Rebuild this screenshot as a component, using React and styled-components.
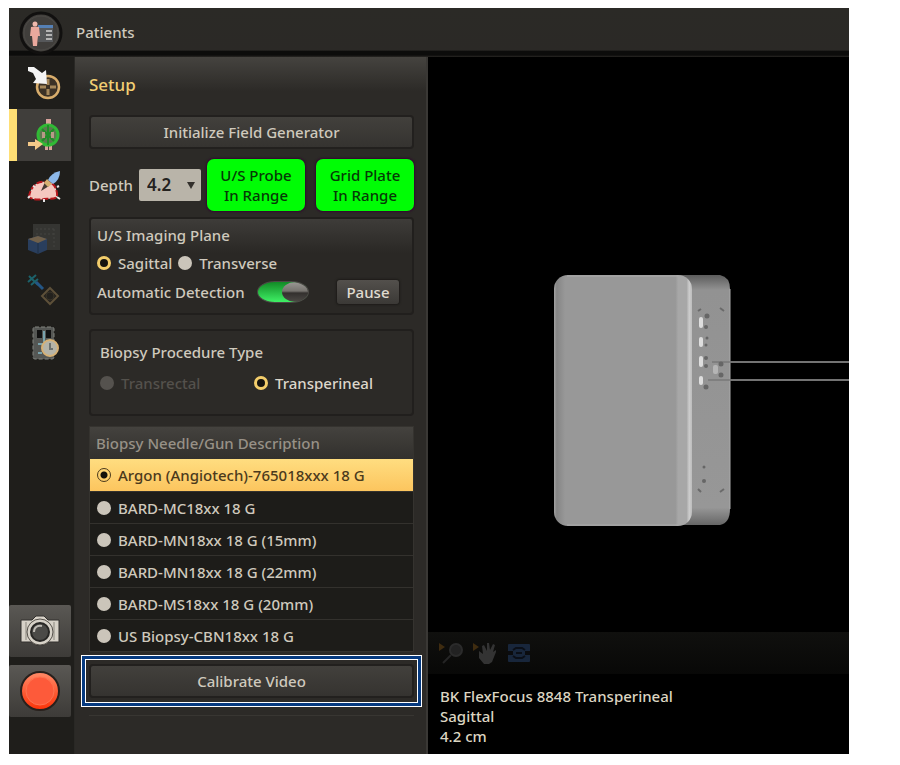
import React, { useState } from "react";
import styled, { createGlobalStyle, css } from "styled-components";

const needles = [
  "Argon (Angiotech)-765018xxx 18 G",
  "BARD-MC18xx 18 G",
  "BARD-MN18xx 18 G (15mm)",
  "BARD-MN18xx 18 G (22mm)",
  "BARD-MS18xx 18 G (20mm)",
  "US Biopsy-CBN18xx 18 G",
];

const PatientIcon = () => (
  <svg width="44" height="48" viewBox="0 0 44 48" aria-hidden="true">
    <circle cx="22" cy="24" r="20" fill="#403e3b" stroke="#11100f" strokeWidth="3" />
    <circle cx="22" cy="24" r="17" fill="none" stroke="#4c4a46" strokeWidth="1" />
    <rect x="19" y="16" width="15" height="17" fill="#56585a" />
    <rect x="19" y="16" width="15" height="3" fill="#5580b5" />
    <path d="M27 22h6M27 26h6M27 30h6" stroke="#b4b4b4" strokeWidth="2" />
    <circle cx="16" cy="15" r="2.5" fill="#f0b9ad" />
    <path d="M12 18q4-1 8 0l1 9h-2l-1 10h-4l-1-10h-2z" fill="#eaa99d" />
  </svg>
);

const TargetIcon = () => (
  <svg width="36" height="36" viewBox="0 0 36 36" aria-hidden="true">
    <circle cx="22" cy="22" r="11" fill="#3c3226" stroke="#d8ad6c" strokeWidth="2.5" />
    <path d="M22 14v6M22 24v6M14 22h6M24 22h6" stroke="#a5875a" strokeWidth="3" />
    <path d="M2 2h6l8 6 4-3 1 14-14-1 3-4-3-6-5-2z" fill="#f4f4f4" />
  </svg>
);

const FieldIcon = () => (
  <svg width="36" height="36" viewBox="0 0 36 36" aria-hidden="true">
    <path d="M20 2h5v6h-5zM19 28h3v5h-3zM23 28h3v5h-3z" fill="#d9a29b" />
    <circle cx="22" cy="18" r="10" fill="#5c7a50" stroke="#31b935" strokeWidth="3" />
    <path d="M22 8v20M16 12l12 12M28 12L16 24" stroke="#1f8e27" strokeWidth="2" />
    <path d="M16 15h3v6h-3zM25 15h3v6h-3z" fill="#b79a86" />
    <path d="M2 25h7v-3l8 5-8 6v-4H2z" fill="#f4c988" />
  </svg>
);

const ContourIcon = () => (
  <svg width="36" height="36" viewBox="0 0 36 36" aria-hidden="true">
    <path
      d="M3 28C4 18 12 11 19 13c7-2 13 6 12 15-4 3-9 1-13 2-5 1-11 1-15-2z"
      fill="#f5c8c0"
      stroke="#b5161c"
      strokeWidth="2"
      strokeDasharray="6 2"
    />
    <path d="M15 22l4-9 4 4z" fill="#453a33" />
    <path d="M18 14l3-4 5 5-4 3z" fill="#d5b072" />
    <path d="M22 11q3-7 12-9 0 9-7 13z" fill="#8db9ea" />
    <path d="M2 29l2-2M18 30v3M31 28l3 2M31 18l2-1M7 17l2 1" stroke="#e5e5e5" strokeWidth="2" />
  </svg>
);

const VolumeIcon = () => (
  <svg width="36" height="36" viewBox="0 0 36 36" aria-hidden="true">
    <rect x="7" y="3" width="27" height="26" fill="#353532" />
    <path d="M10 8h20M10 13h20M28 8v19" stroke="#444440" strokeWidth="1" strokeDasharray="2 2" />
    <path d="M2 18l10-3 9 3v11l-9 4-10-4z" fill="#293e5d" />
    <path d="M2 18l10-3 9 3-9 4z" fill="#70604a" />
    <path d="M12 22v11" stroke="#1f2e45" />
  </svg>
);

const NeedleIcon = () => (
  <svg width="36" height="36" viewBox="0 0 36 36" aria-hidden="true">
    <path d="M3 3l9 9M2 9l8-7M5 12l7-6" stroke="#1c626b" strokeWidth="2" />
    <path d="M10 9l7 7" stroke="#245685" strokeWidth="3" />
    <path d="M24 15l8 8-8 8-8-8z" fill="#23211d" stroke="#5d5039" strokeWidth="2" />
    <circle cx="24" cy="23" r="4" fill="#23211d" stroke="#383327" />
  </svg>
);

const ReportIcon = () => (
  <svg width="36" height="36" viewBox="0 0 36 36" aria-hidden="true">
    <rect x="7" y="2" width="21" height="32" rx="2" fill="#555754" stroke="#82847f" strokeDasharray="4 2" />
    <path d="M11 5h5v8h-5zM20 5h5v8h-5z" fill="#111" />
    <path d="M18 6v11M12 19h5M12 28h4" stroke="#78a2ac" strokeWidth="2" />
    <circle cx="24" cy="23" r="8" fill="#b5b4a8" stroke="#d7b174" strokeWidth="2" />
    <path d="M24 18v6h3" stroke="#6d726f" fill="none" strokeWidth="2" />
  </svg>
);

const CameraIcon = () => (
  <svg width="40" height="34" viewBox="0 0 40 34" aria-hidden="true">
    <path d="M1 6h11l4-4h8l4 4h11v22H28l-4 3h-8l-4-3H1z" fill="#d7d2c8" stroke="#33312e" strokeWidth="1" />
    <path d="M6 8v18M34 8v18" stroke="#8b877f" strokeWidth="1" />
    <circle cx="20" cy="18" r="13" fill="#d7d2c8" stroke="#55514b" strokeWidth="1" />
    <circle cx="20" cy="18" r="9" fill="#4b4a47" stroke="#282725" strokeWidth="2" />
    <path d="M14 18c0-5 4-7 8-6" stroke="#bebbb4" strokeWidth="2" fill="none" />
  </svg>
);

const RecordIcon = () => (
  <svg width="44" height="44" viewBox="0 0 44 44" aria-hidden="true">
    <defs>
      <linearGradient id="record" x1="0" y1="0" x2="0" y2="1">
        <stop offset="0" stopColor="#ff8b68" />
        <stop offset="1" stopColor="#fc3208" />
      </linearGradient>
    </defs>
    <circle cx="22" cy="22" r="19" fill="url(#record)" stroke="#28201c" strokeWidth="2" />
    <circle cx="22" cy="22" r="14" fill="#fd5a3a" stroke="#ff7350" strokeWidth="1" />
  </svg>
);

const ZoomIcon = () => (
  <svg width="26" height="26" viewBox="0 0 26 26" aria-hidden="true">
    <path d="M1 3l6 4-6 4z" fill="#3f2c10" />
    <circle cx="18" cy="10" r="6" fill="#222" stroke="#2b2b2b" strokeWidth="2" />
    <path d="M13 15l-8 8" stroke="#252525" strokeWidth="2" />
  </svg>
);

const PanIcon = () => (
  <svg width="26" height="26" viewBox="0 0 26 26" aria-hidden="true">
    <path d="M1 3l6 4-6 4z" fill="#3f2c10" />
    <path d="M7 11l4 3-1-8 2-1 3 6V3h2l1 7 3-6 2 1-2 7 3-2v2l-4 10-3 2h-5l-5-6z" fill="#333" />
  </svg>
);

const FitIcon = () => (
  <svg width="26" height="26" viewBox="0 0 26 26" aria-hidden="true">
    <rect x="2" y="4" width="22" height="18" rx="1" fill="#18263b" />
    <path d="M2 11h5v4H2zM19 11h5v4h-5z" fill="#0b0c0f" />
    <path d="M7 10l3-2h6l3 2M7 16l3 2h6l3-2M10 13h6" stroke="#0b0f17" strokeWidth="2" fill="none" />
  </svg>
);

const FieldGenerator = () => (
  <SceneDrawing viewBox="0 -2 421 575" preserveAspectRatio="xMaxYMid meet" role="img" aria-label="Field generator">
    <defs>
      <linearGradient id="front">
        <stop offset="0" stopColor="#a2a2a2" />
        <stop offset="0.02" stopColor="#858585" />
        <stop offset="0.08" stopColor="#989898" />
        <stop offset="0.88" stopColor="#989898" />
        <stop offset="0.9" stopColor="#a7a7a7" />
        <stop offset="0.96" stopColor="#a7a7a7" />
        <stop offset="0.98" stopColor="#cdcdcd" />
        <stop offset="1" stopColor="#bcbcbc" />
      </linearGradient>
      <linearGradient id="side" x1="0" y1="0" x2="0" y2="1">
        <stop offset="0" stopColor="#5c5c5c" />
        <stop offset="0.06" stopColor="#929292" />
        <stop offset="0.93" stopColor="#979797" />
        <stop offset="1" stopColor="#666" />
      </linearGradient>
    </defs>
    <path d="M240 216h52q10 2 10 14v220q0 14-10 16h-52z" fill="url(#side)" />
    <path d="M302 230v220" stroke="#aaa" />
    <rect x="126" y="216" width="138" height="251" rx="14" fill="url(#front)" />
    <path d="M139 217h111M139 466h111" stroke="#ababab" />
    <path d="M302 303h119M302 321h119" stroke="#737373" strokeWidth="2" />
    <path d="M284 303h18M280 321h22" stroke="#6b6b6b" strokeWidth="1" />
    <g fill="#dedede">
      <rect x="271" y="258" width="4" height="11" rx="2" />
      <rect x="271" y="278" width="4" height="10" rx="2" />
      <rect x="271" y="297" width="4" height="11" rx="2" />
      <rect x="271" y="317" width="4" height="9" rx="2" />
    </g>
    <g fill="#666">
      <circle cx="279" cy="257" r="2.5" />
      <circle cx="278" cy="268" r="2" />
      <circle cx="279" cy="279" r="1.5" />
      <circle cx="278" cy="286" r="1.5" />
      <circle cx="278" cy="299" r="2" />
      <circle cx="278" cy="307" r="2" />
      <circle cx="278" cy="328" r="2.5" />
      <circle cx="293" cy="305" r="2.5" />
      <circle cx="293" cy="316" r="2.5" />
      <circle cx="276" cy="408" r="1.5" />
      <circle cx="276" cy="422" r="2" />
    </g>
    <rect x="285" y="306" width="5" height="9" rx="2" fill="#b5b5b5" />
    <path d="M270 252l3-2M292 249l4 3M270 430l3 3M296 430l-4 3" stroke="#6a6a6a" strokeWidth="2" fill="none" />
  </SceneDrawing>
);

const tools = [
  { label: "Target", icon: <TargetIcon /> },
  { label: "Setup", icon: <FieldIcon />, active: true },
  { label: "Contour", icon: <ContourIcon /> },
  { label: "Volume", icon: <VolumeIcon /> },
  { label: "Needle", icon: <NeedleIcon /> },
  { label: "Report", icon: <ReportIcon /> },
];

const App = () => {
  const [plane, setPlane] = useState("sagittal");
  const [auto, setAuto] = useState(true);
  const [needle, setNeedle] = useState(needles[0]);

  return (
    <Page>
      <GlobalStyle />
      <Window>
        <TopBar>
          <PatientButton aria-label="Patients"><PatientIcon /></PatientButton>
          <TopTitle>Patients</TopTitle>
        </TopBar>
        <Body>
          <Rail>
            {tools.map((tool) => (
              <RailButton key={tool.label} aria-label={tool.label} $active={tool.active}>
                {tool.icon}
              </RailButton>
            ))}
            <CaptureGroup>
              <CaptureButton aria-label="Take picture"><CameraIcon /></CaptureButton>
              <CaptureButton aria-label="Record"><RecordIcon /></CaptureButton>
            </CaptureGroup>
          </Rail>

          <Panel>
            <PanelTitle>Setup</PanelTitle>
            <WideButton>Initialize Field Generator</WideButton>

            <DepthRow>
              <DepthLabel htmlFor="depth">Depth</DepthLabel>
              <SelectBox>
                <Select id="depth" defaultValue="4.2">
                  <option>4.2</option>
                  <option>5.1</option>
                </Select>
              </SelectBox>
              <StatusGroup>
                <Status>U/S Probe<br />In Range</Status>
                <Status>Grid Plate<br />In Range</Status>
              </StatusGroup>
            </DepthRow>

            <PlaneGroup role="radiogroup" aria-label="U/S Imaging Plane">
              <h3>U/S Imaging Plane</h3>
              <PlaneOptions>
                <Option>
                  <Radio name="plane" checked={plane === "sagittal"} onChange={() => setPlane("sagittal")} />
                  Sagittal
                </Option>
                <Option>
                  <Radio name="plane" checked={plane === "transverse"} onChange={() => setPlane("transverse")} />
                  Transverse
                </Option>
              </PlaneOptions>
              <DetectionRow>
                <SwitchLabel>
                  Automatic Detection
                  <Switch checked={auto} onChange={() => setAuto(!auto)} />
                </SwitchLabel>
                <SmallButton>Pause</SmallButton>
              </DetectionRow>
            </PlaneGroup>

            <ProcedureGroup role="radiogroup" aria-label="Biopsy Procedure Type">
              <h3>Biopsy Procedure Type</h3>
              <ProcedureOptions>
                <Option $disabled>
                  <Radio name="procedure" disabled />
                  Transrectal
                </Option>
                <Option $bright>
                  <Radio name="procedure" defaultChecked />
                  Transperineal
                </Option>
              </ProcedureOptions>
            </ProcedureGroup>

            <NeedleList role="radiogroup" aria-label="Biopsy Needle/Gun Description">
              <NeedleHeader>Biopsy Needle/Gun Description</NeedleHeader>
              {needles.map((name) => (
                <NeedleRow key={name} $selected={needle === name}>
                  <NeedleRadio name="needle" checked={needle === name} onChange={() => setNeedle(name)} />
                  {name}
                </NeedleRow>
              ))}
            </NeedleList>

            <Highlight>
              <WideButton>Calibrate Video</WideButton>
            </Highlight>
            <Divider />
          </Panel>

          <Viewer>
            <FieldGenerator />
            <ViewerTools>
              <ToolButton aria-label="Zoom"><ZoomIcon /></ToolButton>
              <ToolButton aria-label="Pan"><PanIcon /></ToolButton>
              <ToolButton aria-label="Fit"><FitIcon /></ToolButton>
            </ViewerTools>
            <ProbeInfo>
              <p>BK FlexFocus 8848 Transperineal</p>
              <p>Sagittal</p>
              <p>4.2 cm</p>
            </ProbeInfo>
          </Viewer>
        </Body>
      </Window>
    </Page>
  );
};

const GlobalStyle = createGlobalStyle`
  * {
    box-sizing: border-box;
  }

  body {
    margin: 0;
    background: #fff;
    color: #cfc9bd;
    font-family: "Noto Sans", sans-serif;
    font-size: 15px;
    font-weight: 500;
    line-height: 20px;
  }

  button, input, select {
    margin: 0;
    font: inherit;
    color: inherit;
  }

  p, h1, h2, h3 {
    margin: 0;
    font-size: inherit;
    font-weight: inherit;
  }

  svg {
    display: block;
  }
`;

const Page = styled.div`
  display: flex;
  min-height: 100vh;
  padding: 8px 51px 11px 9px;
`;

const Window = styled.div`
  flex: 1;
  display: flex;
  flex-direction: column;
  background: #1f1e1b;
`;

const TopBar = styled.header`
  display: flex;
  align-items: center;
  gap: 13px;
  height: 49px;
  padding: 0 10px;
  background: linear-gradient(#2b2a26, #2b2926 86%, #0c0c0b 88%, #0c0c0b 96%, #292724);
`;

const PatientButton = styled.button`
  padding: 0;
  border: 0;
  background: none;
`;

const TopTitle = styled.h1`
  padding-bottom: 2px;
`;

const Body = styled.div`
  flex: 1;
  display: flex;
`;

const Rail = styled.nav`
  display: flex;
  flex-direction: column;
  flex: 0 0 66px;
  padding-right: 3px;
  border-right: 1px solid #292825;
  background: #1f1e1b;
`;

const RailButton = styled.button`
  display: flex;
  align-items: center;
  justify-content: center;
  height: 52px;
  padding: 0;
  border: 0;
  border-left: 8px solid ${({ $active }) => ($active ? "#ffdf75" : "transparent")};
  background: ${({ $active }) => ($active ? "#403e3b" : "none")};
`;

const CaptureGroup = styled.div`
  display: flex;
  flex-direction: column;
  gap: 8px;
  margin-top: auto;
  padding-bottom: 37px;
`;

const CaptureButton = styled.button`
  display: flex;
  align-items: center;
  justify-content: center;
  height: 52px;
  padding: 0;
  border: 0;
  border-radius: 2px;
  background: linear-gradient(#5a5854, #3d3b38);
`;

const Panel = styled.section`
  flex: 0 0 353px;
  display: flex;
  flex-direction: column;
  padding: 18px 12px 0 14px;
  border-right: 2px solid #3a3835;
  background: linear-gradient(#45433f, #2c2a27 34px);
`;

const PanelTitle = styled.h2`
  margin-bottom: 20px;
  color: #f2cf74;
  font-size: 17px;
`;

const WideButton = styled.button`
  width: 100%;
  height: 34px;
  padding: 0;
  border: 2px solid #22201e;
  border-radius: 4px;
  background: linear-gradient(#42403c, #353330);
`;

const DepthRow = styled.div`
  display: flex;
  align-items: center;
  justify-content: space-between;
  margin-top: 10px;
`;

const DepthLabel = styled.label`
  flex: none;
`;

const SelectBox = styled.div`
  display: flex;
  align-items: center;
  width: 62px;
  height: 32px;
  padding-right: 6px;
  border-radius: 2px;
  background: #b9b4a9;

  &::after {
    content: "";
    border: 4px solid transparent;
    border-top: 7px solid #33302c;
    border-bottom: 0;
  }
`;

const Select = styled.select`
  flex: 1;
  min-width: 0;
  padding: 0 0 0 8px;
  border: 0;
  background: none;
  color: #24221f;
  font-size: 17px;
  font-weight: 600;
  appearance: none;
`;

const StatusGroup = styled.div`
  display: flex;
  gap: 11px;
`;

const Status = styled.div`
  width: 98px;
  height: 52px;
  padding: 6px 0;
  border-radius: 7px;
  background: #00fd05;
  box-shadow: 0 0 2px 1px #32082f;
  color: #063a06;
  text-align: center;
`;

const Group = styled.div`
  border: 2px solid #211f1d;
  border-radius: 4px;
`;

const PlaneGroup = styled(Group)`
  height: 98px;
  margin-top: 6px;
  padding: 6px 13px 0 6px;
  background: linear-gradient(#3e3c39, #2a2825 34px);
`;

const ProcedureGroup = styled(Group)`
  height: 87px;
  margin-top: 14px;
  padding: 11px 12px 0 9px;
`;

const PlaneOptions = styled.div`
  display: flex;
  gap: 6px;
  margin-top: 8px;
`;

const ProcedureOptions = styled.div`
  display: flex;
  justify-content: space-between;
  margin-top: 11px;
  padding-right: 27px;
`;

const Option = styled.label`
  display: flex;
  align-items: center;
  gap: 7px;
  color: ${({ $disabled, $bright }) => ($disabled ? "#54514c" : $bright ? "#ddd7cb" : "#cfc9bd")};
`;

const Radio = styled.input.attrs({ type: "radio" })`
  flex: none;
  width: 14px;
  height: 14px;
  border-radius: 50%;
  background: #cbc5ba;
  appearance: none;

  &:checked {
    border: 3px solid #f3cd6b;
    background: #15130f;
  }

  &:disabled {
    background: #55524e;
  }
`;

const DetectionRow = styled.div`
  display: flex;
  align-items: center;
  justify-content: space-between;
  margin-top: 7px;
`;

const SwitchLabel = styled.label`
  display: flex;
  align-items: center;
  gap: 12px;
`;

const Switch = styled.input.attrs({ type: "checkbox", role: "switch" })`
  display: flex;
  width: 52px;
  height: 22px;
  border: 1px solid #4b4945;
  border-radius: 18px / 11px;
  background: #3a3835;
  appearance: none;
  overflow: hidden;

  &::before {
    content: "";
    width: 26px;
    height: 20px;
    border-radius: 50%;
    background: linear-gradient(#9a9894, #77746f 45%, #33302e 55%, #4d4a46);
  }

  &:checked {
    justify-content: flex-end;
    background: linear-gradient(90deg, transparent 70%, #3a3835 80%), linear-gradient(#128a26, #3ff065);
  }
`;

const SmallButton = styled.button`
  width: 62px;
  height: 24px;
  padding: 0;
  border: 0;
  border-radius: 3px;
  background: linear-gradient(#53504c, #3b3936);
  box-shadow: 0 0 2px 1px #1d1b19;
  color: #e0dbd0;
`;

const NeedleList = styled.div`
  margin-top: 10px;
  border: 1px solid #35332f;
`;

const NeedleHeader = styled.h3`
  padding: 6px;
  background: linear-gradient(#44423e, #32302d);
  color: #979187;
`;

const NeedleRow = styled.label`
  display: flex;
  align-items: center;
  gap: 7px;
  height: 32px;
  padding-left: 7px;
  border-top: 1px solid #33312d;
  background: #1d1c19;

  ${({ $selected }) =>
    $selected &&
    css`
      border-top: 0;
      background: linear-gradient(#ffdd80, #fcc55e);
      color: #4b3a1c;
    `}
`;

const NeedleRadio = styled(Radio)`
  &:checked {
    border: 1px solid #4b3a1c;
    background: radial-gradient(#15120b 3px, transparent 4px);
  }
`;

const Highlight = styled.div`
  margin: 3px -8px 0;
  padding: 8px 7px;
  border: 1px solid #fff;
  box-shadow: inset 0 0 0 3px #063a80, inset 0 0 0 4px #fff;
`;

const Divider = styled.hr`
  width: 100%;
  margin: 8px 0 0;
  border: 0;
  border-top: 1px solid #383632;
`;

const Viewer = styled.main`
  flex: 1;
  min-width: 0;
  display: flex;
  flex-direction: column;
  background: #000;
`;

const SceneDrawing = styled.svg`
  flex: 1;
  width: 100%;
  min-height: 0;
`;

const ViewerTools = styled.div`
  display: flex;
  align-items: center;
  gap: 8px;
  height: 42px;
  padding: 0 10px;
  background: linear-gradient(#10100e, #080807);
`;

const ToolButton = styled.button`
  padding: 0;
  border: 0;
  background: none;
`;

const ProbeInfo = styled.div`
  height: 80px;
  padding: 12px 12px 0;
  color: #dcd5c2;
`;

export default App;
